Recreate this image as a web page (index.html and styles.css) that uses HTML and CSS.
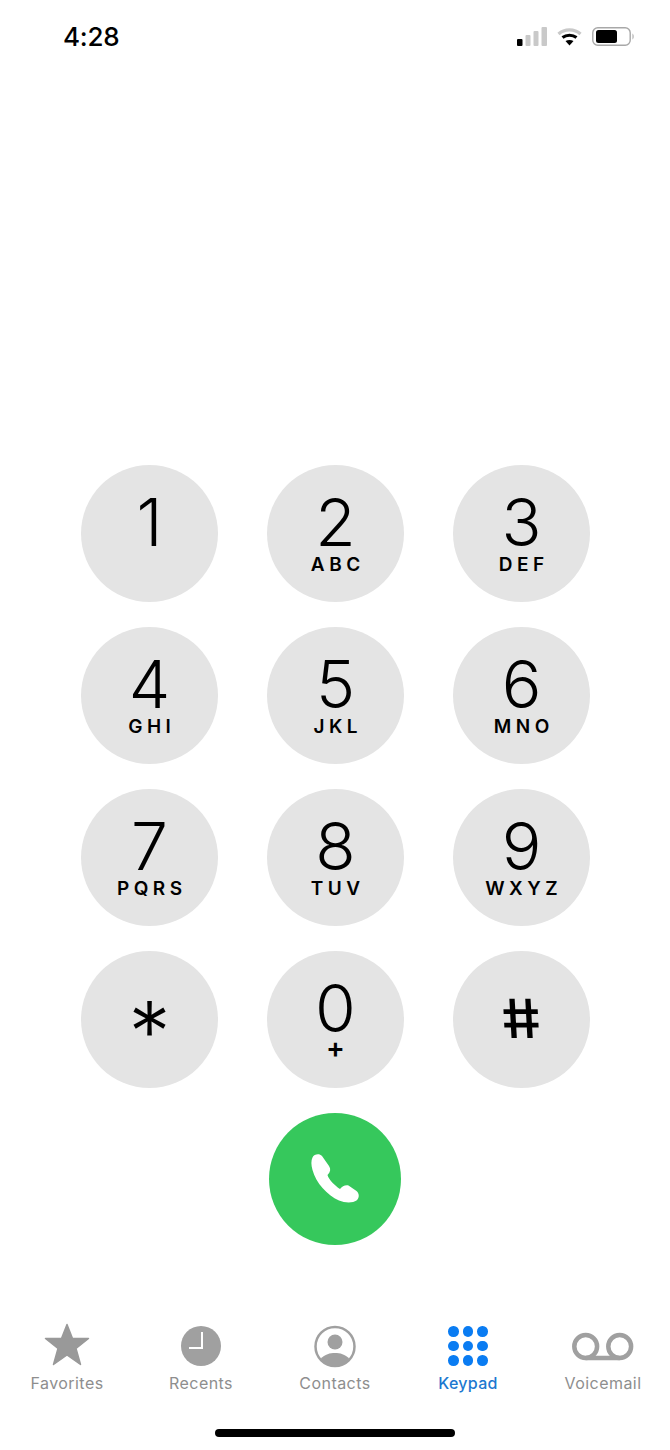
FILE: index.html
```html
<!DOCTYPE html>
<html lang="en">
<head>
    <meta charset="UTF-8">
    <meta name="viewport" content="width=device-width, initial-scale=1.0">
    <title>Keypad</title>
    <link rel="stylesheet" href="styles.css">
</head>
<body>

    <div id="phone">
        <div class="statusBar">
            <span class="time">4:28</span>
            <span class="statusIcons">
                <svg class="signal" width="30" height="19" viewBox="0 0 30 19">
                    <rect x="0" y="12" width="5.500" height="7" rx="1" fill="#000"/>
                    <rect x="8.500" y="8" width="5" height="11" rx="1" fill="#c9c9c9"/>
                    <rect x="16.500" y="4" width="5" height="15" rx="1" fill="#c9c9c9"/>
                    <rect x="24.500" y="0" width="5.500" height="19" rx="1" fill="#c9c9c9"/>
                </svg>
                <svg class="wifi" width="25" height="19" viewBox="0 0 25 19">
                    <path d="M1.500 7C7.500 1.500 17.500 1.500 23.500 7" fill="none" stroke="#c9c9c9" stroke-width="3.200"/>
                    <path d="M5.500 10.500C9.500 7.500 15.500 7.500 19.500 10.500" fill="none" stroke="#000" stroke-width="3.200"/>
                    <path d="M8.500 14C11 12.500 14 12.500 16.500 14L12.500 18.500Z" fill="#000"/>
                </svg>
                <svg class="battery" width="42" height="19" viewBox="0 0 42 19">
                    <rect x="0.800" y="0.800" width="37.400" height="17.400" rx="5" fill="none" stroke="#a8a8a8" stroke-width="1.400"/>
                    <rect x="4" y="3" width="21" height="13" rx="2.500" fill="#000"/>
                    <path d="M40.500 6.500C42 7.500 42 11.500 40.500 12.500Z" fill="#a8a8a8"/>
                </svg>
            </span>
        </div>

        <div class="keypad">
            <div class="key"><span class="digit">1</span></div>
            <div class="key"><span class="digit">2</span><span class="letters">ABC</span></div>
            <div class="key"><span class="digit">3</span><span class="letters">DEF</span></div>
            <div class="key"><span class="digit">4</span><span class="letters">GHI</span></div>
            <div class="key"><span class="digit">5</span><span class="letters">JKL</span></div>
            <div class="key"><span class="digit">6</span><span class="letters">MNO</span></div>
            <div class="key"><span class="digit">7</span><span class="letters">PQRS</span></div>
            <div class="key"><span class="digit">8</span><span class="letters">TUV</span></div>
            <div class="key"><span class="digit">9</span><span class="letters">WXYZ</span></div>
            <div class="key"><span class="digit star">*</span></div>
            <div class="key"><span class="digit">0</span><span class="letters plus">+</span></div>
            <div class="key"><span class="digit hash">#</span></div>
        </div>

        <div class="callButton">
            <svg width="80" height="80" viewBox="0 0 80 80">
                <path d="M17.500 18.500C19 15.500 24 14 27 17L34 27C36 30 35.500 33 32.500 36C33.500 40 40 47 45 50C47 47.500 50.500 45.500 53.500 46.500L61.500 52C64.500 54.500 64.500 59 61.500 61.500C58 64 50 64 44 61.500C32 56 21 44 17.500 31C16 26 16 21.500 17.500 18.500Z" fill="#fff"/>
            </svg>
        </div>

        <div class="tabBar">
            <div class="tab">
                <svg class="tabIcon" width="48" height="46" viewBox="0 0 48 46">
                    <path d="M24 1.500L29.500 15.500H45.500L33 25.500L37.500 41.500L24 32L10.500 41.500L15 25.500L2.500 15.500H18.500Z" fill="#999" stroke="#999" stroke-width="1.500" stroke-linejoin="round"/>
                </svg>
                <span>Favorites</span>
            </div>
            <div class="tab">
                <svg class="tabIcon" width="48" height="46" viewBox="0 0 48 46">
                    <circle cx="24" cy="23" r="20" fill="#a0a0a0"/>
                    <path d="M25 9V25H12" fill="none" stroke="#fff" stroke-width="2"/>
                </svg>
                <span>Recents</span>
            </div>
            <div class="tab">
                <svg class="tabIcon" width="48" height="46" viewBox="0 0 48 46">
                    <circle cx="24" cy="23.500" r="19.500" fill="none" stroke="#a0a0a0" stroke-width="2.500"/>
                    <circle cx="24" cy="19" r="7.500" fill="#a0a0a0"/>
                    <path d="M9.500 36C14 31 19 30 24 30C29 30 34 31 38.500 36C34 41 29 43 24 43C19 43 14 41 9.500 36Z" fill="#a0a0a0"/>
                </svg>
                <span>Contacts</span>
            </div>
            <div class="tab active">
                <div class="dots">
                    <i></i><i></i><i></i>
                    <i></i><i></i><i></i>
                    <i></i><i></i><i></i>
                </div>
                <span>Keypad</span>
            </div>
            <div class="tab">
                <svg class="tabIcon" width="62" height="46" viewBox="0 0 62 46">
                    <circle cx="13.700" cy="23.500" r="11.400" fill="none" stroke="#a0a0a0" stroke-width="4.500"/>
                    <circle cx="47.700" cy="23.500" r="11.400" fill="none" stroke="#a0a0a0" stroke-width="4.500"/>
                    <path d="M13.700 34.900H47.700" fill="none" stroke="#a0a0a0" stroke-width="4.500"/>
                </svg>
                <span>Voicemail</span>
            </div>
        </div>

        <div class="homeBar"></div>
    </div>

</body>
</html>
```

FILE: styles.css
```css
body {
    margin: 0;
    background-color: #fff;
    font-family: 'Inter', 'Liberation Sans', sans-serif;
    color: #000;
}

#phone {
    width: 670px;
    height: 1450px;
    display: flex;
    flex-direction: column;
    overflow: hidden;
}

.statusBar {
    height: 73px;
    padding: 0 36px 0 63px;
    display: flex;
    justify-content: space-between;
    align-items: center;
    flex-shrink: 0;
}

.time {
    font-size: 26px;
    font-weight: 550;
    letter-spacing: -0.2px;
    line-height: 73px;
}

.statusIcons {
    display: flex;
    align-items: center;
    gap: 10px;
}

.keypad {
    margin-top: 392px;
    margin-left: 81px;
    display: grid;
    grid-template-columns: repeat(3, 137px);
    column-gap: 49px;
    row-gap: 25px;
}

.key {
    width: 137px;
    height: 137px;
    border-radius: 50%;
    background-color: #e4e4e4;
    display: flex;
    flex-direction: column;
    align-items: center;
}

.digit {
    font-size: 66px;
    font-weight: 350;
    line-height: 66px;
    margin-top: 24px;
}

.letters {
    font-size: 19px;
    font-weight: 600;
    line-height: 20px;
    letter-spacing: 4.500px;
    margin-right: -4.500px;
}

.plus {
    font-size: 28px;
    margin-top: -3px;
}

.star {
    font-size: 84px;
    line-height: 84px;
    margin-top: 39px;
}

.hash {
    font-size: 54px;
    font-weight: 500;
    line-height: 54px;
    margin-top: 41px;
    transform: scaleX(1.15) skewX(12deg);
}

.callButton {
    width: 132px;
    height: 132px;
    margin: 25px auto 0;
    border-radius: 50%;
    background-color: #36c85c;
    display: flex;
    align-items: center;
    justify-content: center;
    flex-shrink: 0;
}

.tabBar {
    margin-top: 78px;
    display: grid;
    grid-template-columns: repeat(5, 134px);
}

.tab {
    display: flex;
    flex-direction: column;
    align-items: center;
    font-size: 16px;
    letter-spacing: 0.45px;
    line-height: 20px;
    color: #8e8e8e;
}

.tab span {
    margin-top: 4px;
}

.tabIcon {
    display: block;
}

.tab.active {
    color: #1c78d0;
    font-weight: 500;
    letter-spacing: 0.3px;
    margin-right: 2px;
}

.dots {
    width: 46px;
    height: 46px;
    display: grid;
    grid-template-columns: repeat(3, 10.500px);
    grid-template-rows: repeat(3, 10.500px);
    gap: 3.800px;
    align-content: center;
    justify-content: center;
}

.dots i {
    border-radius: 50%;
    background-color: #0a7cf2;
}

.homeBar {
    width: 240px;
    height: 8px;
    border-radius: 4px;
    background-color: #000;
    margin: 36px auto 0;
}
```
